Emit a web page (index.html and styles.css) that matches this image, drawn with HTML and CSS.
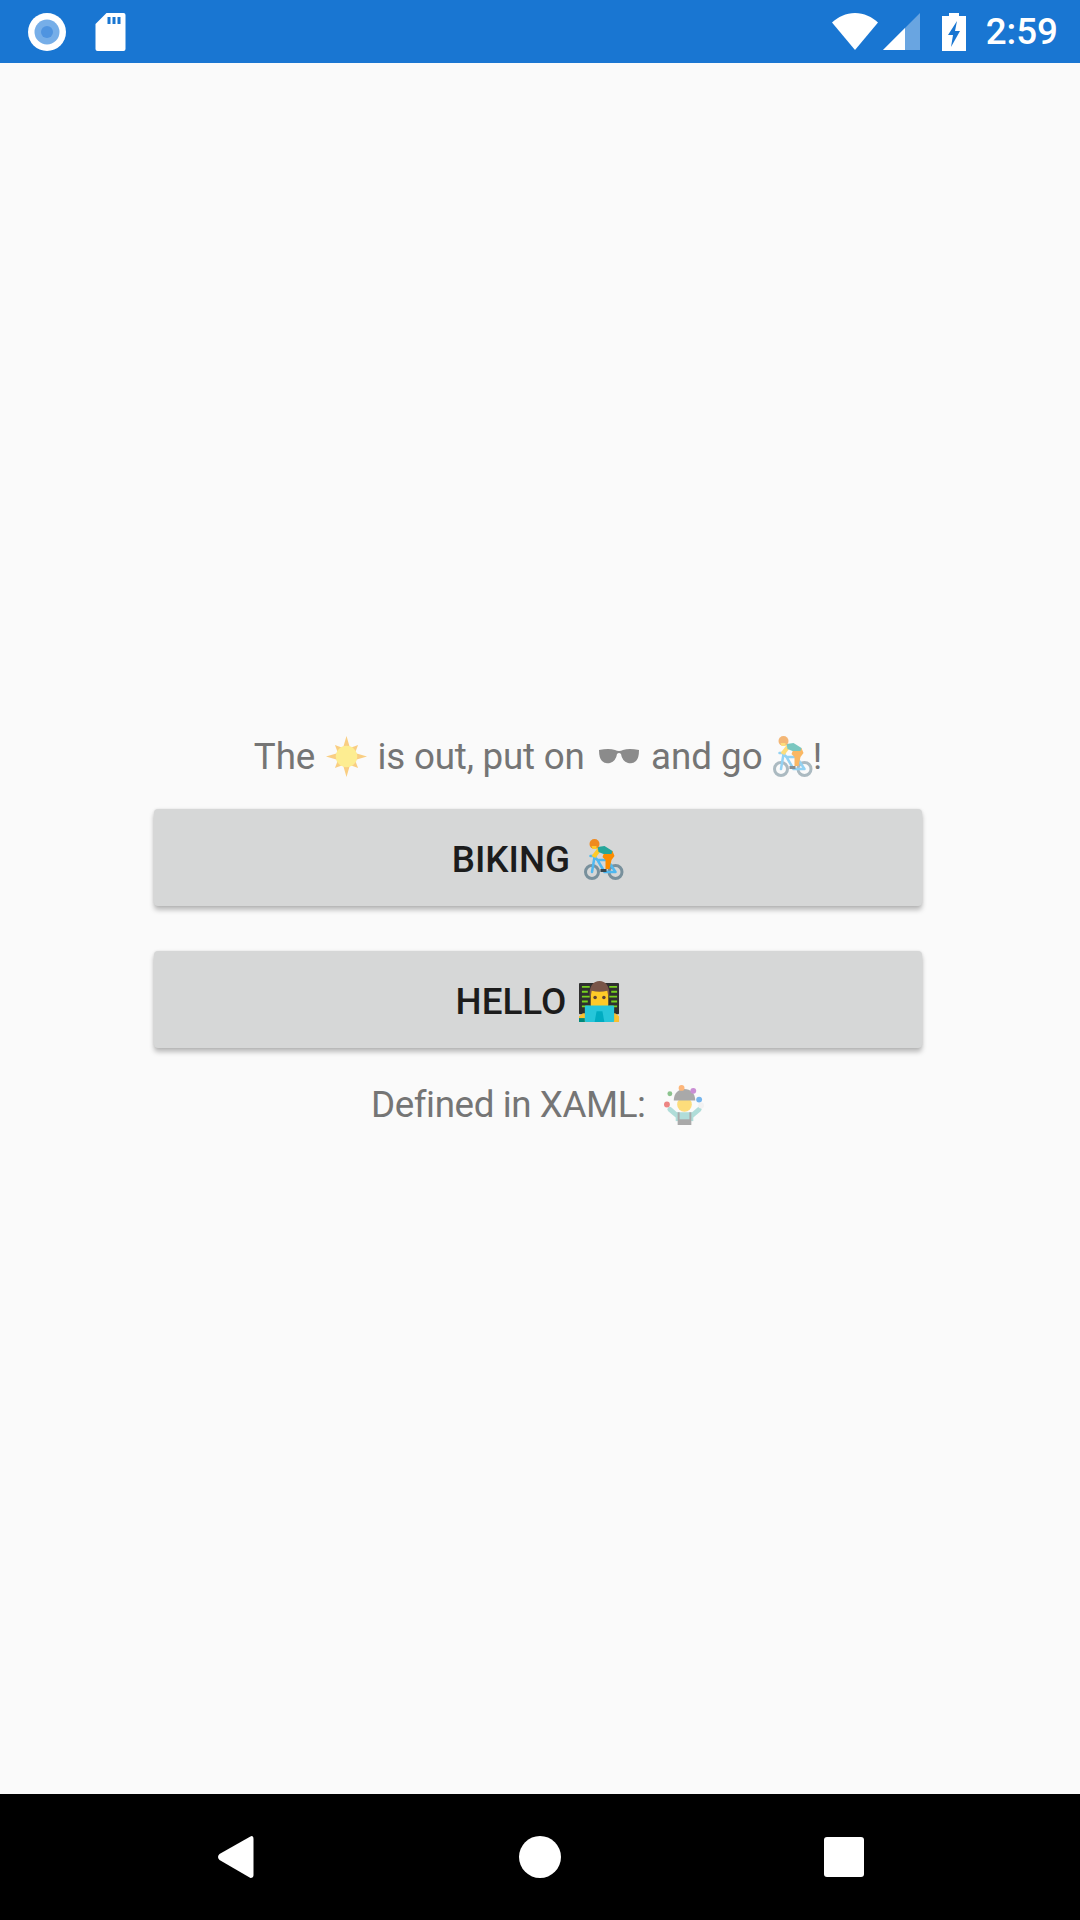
FILE: index.html
```html
<html>
<head>
  <meta http-equiv="Content-Type" content="text/html; charset=utf8">
  <title>Emoji sample</title>
  <link rel="stylesheet" href="styles.css">
</head>
<body>
  <svg class="defs" width="0" height="0">
    <!-- emoji have no installed font here, so they are drawn -->
    <symbol id="e_sun" viewBox="0 0 40 40">
      <path fill="#f9b233" d="M20 0l3.400 11.700 7.900-3 -3 7.900L40 20l-11.700 3.400 3 7.900-7.900-3L20 40l-3.400-11.700-7.900 3 3-7.900L0 20l11.700-3.400-3-7.900 7.900 3z"/>
      <circle cx="20" cy="20" r="10.500" fill="#ffe64d"/>
    </symbol>
    <symbol id="e_glasses" viewBox="0 0 40 16">
      <path fill="#424242" d="M0 2q10-2 16 0 2 1 4 1t4-1q6-2 16 0 0 8-3 11-3 3-8 2-6-2-7-9-1-1-2-1t-2 1q-1 7-7 9-5 1-8-2-3-3-3-11z"/>
    </symbol>
    <symbol id="e_bike" viewBox="0 0 40 41">
      <g fill="none" stroke-linecap="round" stroke-linejoin="round">
        <circle cx="8.500" cy="33" r="6.500" stroke="#78909c" stroke-width="3"/>
        <circle cx="32" cy="33" r="6.500" stroke="#78909c" stroke-width="3"/>
        <path stroke="#4fb8f0" stroke-width="2.500" d="M8.500 33L11 18l3 3 7 12h11L24 21H14M7 17h5"/>
      </g>
      <path fill="#fb8c00" d="M21 13l8-1 2 5-3 4-2 9-4 0 0-9-3-3z"/>
      <path fill="#ffca28" d="M15 8l3 3-6 8-4-2z"/>
      <path fill="#26a69a" d="M14 8l7-1 8 5-1 3-8 0-5-2z"/>
      <rect x="17" y="30" width="6" height="3" fill="#37474f"/>
      <circle cx="11" cy="5" r="5" fill="#ef8a1f"/>
      <path fill="#ffca28" d="M8 7h5v3h-4z"/>
    </symbol>
    <symbol id="e_tech" viewBox="0 0 42 42">
      <rect x="0" y="2" width="41" height="32" rx="1" fill="#2f2f2f"/>
      <path stroke="#76d01f" stroke-width="2" d="M3 6h8M3 11h6M3 16h8M3 21h6M3 26h8M31 6h8M33 11h6M31 16h8M33 21h6M31 26h8"/>
      <path fill="#fbc02d" d="M0 42v-6l4-3h33l4 3v6z"/>
      <path fill="#00897b" d="M0 38h6v4H0z"/>
      <path fill="#ffca28" d="M12 9h18v17H12z"/>
      <path fill="#795548" d="M11 16C10 5 15 0 21 0s11 5 10 16h-1l-1-6q-8 2-16 0l-1 6z"/>
      <circle cx="16.500" cy="17" r="1.800" fill="#5d4037"/>
      <circle cx="25.500" cy="17" r="1.800" fill="#5d4037"/>
      <rect x="6" y="25" width="30" height="17" rx="1" fill="#26c6da"/>
      <path fill="#00acc1" d="M18 31h6l2 11h-10z"/>
    </symbol>
    <symbol id="e_juggle" viewBox="0 0 42 42">
      <path fill="none" stroke="#80cbc4" stroke-width="5" stroke-linecap="round" stroke-linejoin="round" d="M6 26l7 6h16l7-6"/>
      <rect x="12" y="29" width="18" height="9" fill="#80cbc4"/>
      <path fill="#757575" d="M14 29h2v7h10v-7h2v13H14z"/>
      <circle cx="21" cy="21" r="7.500" fill="#ffca28"/>
      <path fill="#757575" d="M10 17c0-8 5-12 11-12s11 4 11 12z"/>
      <circle cx="18" cy="4" r="3" fill="#ff8a26"/>
      <circle cx="30" cy="7" r="3" fill="#ab47bc"/>
      <circle cx="6" cy="10" r="2.500" fill="#43a047"/>
      <circle cx="3" cy="21" r="3" fill="#e53935"/>
      <circle cx="36" cy="16" r="3" fill="#1e88e5"/>
      <circle cx="38" cy="22" r="3" fill="#eeeeee"/>
    </symbol>
  </svg>

  <div class="page">
    <div class="status_bar">
      <svg class="ic_record" viewBox="0 0 38 38">
        <circle cx="19" cy="19" r="19" fill="#fff"/>
        <circle cx="19" cy="19" r="12.500" fill="#76aee8"/>
        <circle cx="19" cy="19" r="6" fill="#4f94e0"/>
      </svg>
      <svg class="ic_sd" viewBox="0 0 30 38">
        <path fill="#fff" d="M11 0h17q2 0 2 2v34q0 2-2 2H2q-2 0-2-2V11z"/>
        <path fill="#1976d2" d="M12 4h3v7h-3zM17 4h3v7h-3zM22 4h3v7h-3z"/>
      </svg>
      <div class="status_right">
        <svg class="ic_wifi" viewBox="0 0 46 37">
          <path fill="#fff" d="M23 37L0 9.500C6 4 14 0 23 0s17 4 23 9.500z"/>
        </svg>
        <svg class="ic_signal" viewBox="0 0 37 37">
          <path fill="#fff" fill-opacity=".35" d="M37 0v37H0z"/>
          <path fill="#fff" d="M22 15v22H0z"/>
        </svg>
        <svg class="ic_batt" viewBox="0 0 24 38">
          <path fill="#fff" d="M7 0h10v3h7v35H0V3h7z"/>
          <path fill="#1976d2" d="M15 8L6 22h5l-2 12 9-16h-5z"/>
        </svg>
        <span class="clock">2:59</span>
      </div>
    </div>

    <div class="content">
      <div class="label label_top">
        The <svg class="emoji emoji_sun"><use href="#e_sun"/></svg> <span class="tight">is out, put on</span>
        <svg class="emoji emoji_glasses"><use href="#e_glasses"/></svg> and go
        <svg class="emoji emoji_bike"><use href="#e_bike"/></svg>!
      </div>
      <div class="btn">BIKING <svg class="emoji_btn"><use href="#e_bike"/></svg></div>
      <div class="btn">HELLO <svg class="emoji_btn"><use href="#e_tech"/></svg></div>
      <div class="label label_bottom">
        Defined in XAML:&nbsp; <svg class="emoji emoji_juggle"><use href="#e_juggle"/></svg>
      </div>
    </div>

    <div class="nav_bar">
      <svg class="nav_back" viewBox="0 0 36 42">
        <path fill="#fff" d="M34 0q2 0 2 3v36q0 3-3 3L2 24q-3-3 0-6L32 1z"/>
      </svg>
      <div class="nav_home"></div>
      <div class="nav_recent"></div>
    </div>
  </div>
</body>
</html>
```

FILE: styles.css
```css
html, body {
  margin: 0;
  padding: 0;
}
body {
  background-color: #fafafa;
  font-family: Roboto, "Liberation Sans", sans-serif;
}
.defs {
  position: absolute;
}
.page {
  width: 1080px;
  height: 1920px;
  display: flex;
  flex-direction: column;
}

.status_bar {
  height: 63px;
  background-color: #1976d2;
  display: flex;
  align-items: center;
  padding: 0 22px 0 28px;
}
.ic_record {
  width: 38px;
  height: 38px;
}
.ic_sd {
  width: 31px;
  height: 38px;
  margin-left: 29px;
}
.status_right {
  margin-left: auto;
  display: flex;
  align-items: center;
}
.ic_wifi {
  width: 46px;
  height: 37px;
}
.ic_signal {
  width: 37px;
  height: 37px;
  margin-left: 5px;
}
.ic_batt {
  width: 24px;
  height: 38px;
  margin-left: 22px;
}
.clock {
  color: #ffffff;
  font-size: 36.750px;
  font-weight: 500;
  margin-left: 20px;
}

.content {
  flex: 1;
  display: flex;
  flex-direction: column;
  align-items: center;
  justify-content: center;
  padding: 4px 4px 0 0;
}
.label {
  color: #757575;
  font-size: 36.750px;
  line-height: 43px;
  white-space: nowrap;
}
.label_top {
  margin-bottom: 31px;
}
.label_bottom {
  margin-top: 35px;
  letter-spacing: -0.4px;
}
.tight {
  letter-spacing: -0.2px;
}
.emoji {
  width: 41px;
  height: 41px;
  vertical-align: -8px;
  opacity: 0.6;
}
.emoji_sun {
  margin: 0 1px 0 2px;
}
.emoji_glasses {
  width: 40px;
  height: 16px;
  vertical-align: 5px;
  margin: 0 3px 0 5px;
}
.emoji_bike {
  margin: 0;
}
.emoji_juggle {
  margin-left: 1px;
}
.btn {
  box-sizing: border-box;
  width: 768px;
  height: 97px;
  padding-top: 4px;
  background-color: #d6d7d7;
  border-radius: 4px;
  box-shadow: 0 4px 5px rgba(0, 0, 0, 0.25), 0 0 3px rgba(0, 0, 0, 0.1);
  color: #1c1c1c;
  font-size: 36.750px;
  font-weight: 500;
  display: flex;
  align-items: center;
  justify-content: center;
  gap: 4px;
  white-space: pre;
}
.btn + .btn {
  margin-top: 45px;
}
.emoji_btn {
  width: 41px;
  height: 41px;
}

.nav_bar {
  height: 126px;
  background-color: #000000;
  display: flex;
  align-items: center;
  justify-content: space-between;
  padding: 0 216px 0 217px;
}
.nav_back {
  width: 37px;
  height: 42px;
}
.nav_home {
  width: 42px;
  height: 42px;
  margin-left: 2px;
  border-radius: 50%;
  background-color: #ffffff;
}
.nav_recent {
  width: 40px;
  height: 40px;
  border-radius: 3px;
  background-color: #ffffff;
}
```
